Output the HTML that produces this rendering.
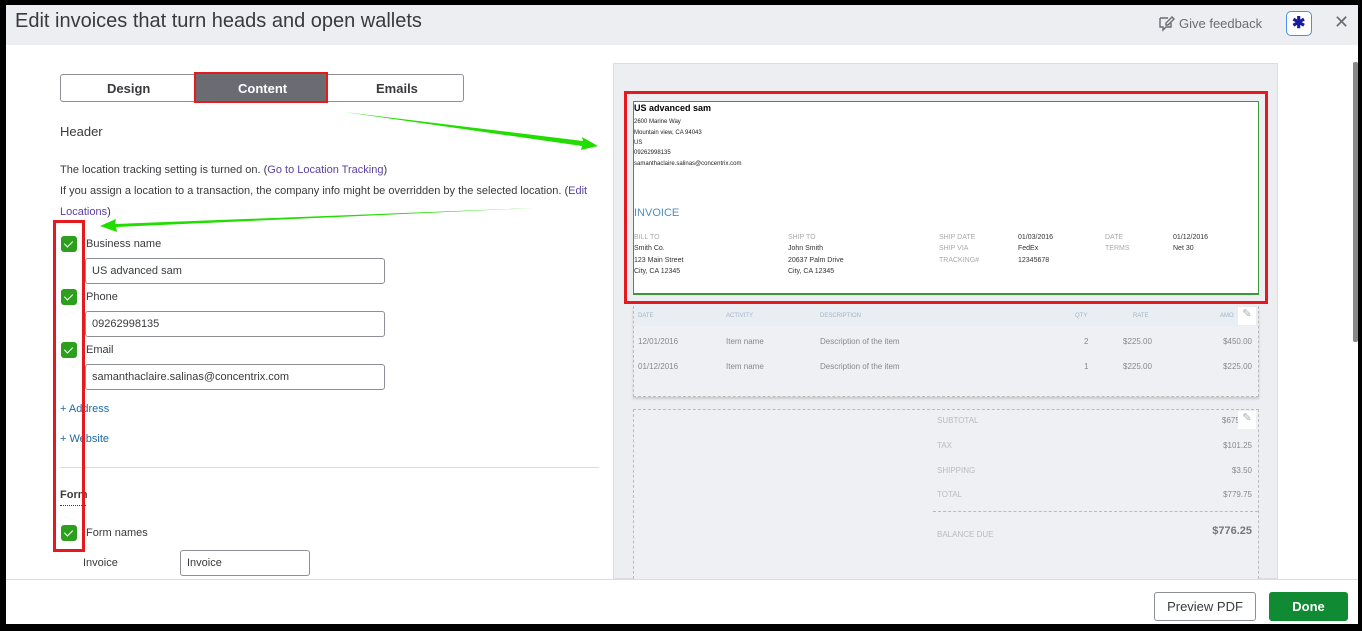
<!DOCTYPE html>
<html><head><meta charset="utf-8"><style>
*{margin:0;padding:0;box-sizing:border-box}
body{width:1362px;height:631px;background:#000;position:relative;overflow:hidden;font-family:"Liberation Sans",sans-serif;color:#393a3d}
.a{position:absolute}
.t{font-size:11px;white-space:nowrap}
.cb{position:absolute;left:61px;width:16px;height:16px;background:#2ca01c;border-radius:3px}
.cb:after{content:"";position:absolute;left:5px;top:3px;width:4px;height:7px;border:solid #fff;border-width:0 1.5px 1.5px 0;transform:rotate(45deg)}
.inp{position:absolute;left:85px;width:300px;height:26px;border:1px solid #8d9096;border-radius:3px;font-size:11px;padding:6px 0 0 6px;color:#393a3d}
.lbl{position:absolute;left:86px;font-size:11px}
.inv{font-family:"Liberation Sans",sans-serif;white-space:nowrap;position:absolute}
.s{font-size:6px;color:#222}
.g{font-size:7px;color:#aaa}
.d{font-size:7px;color:#333}
.r{font-size:8px;color:#888}
.ra{right:110px;text-align:right}
</style></head><body>
<div class="a" style="left:6px;top:5px;width:1352px;height:619px;background:#fff"></div>
<div class="a" style="left:6px;top:5px;width:1352px;height:40px;background:#eceef1"></div>
<div class="a" style="left:15px;top:10px;font-size:20px;color:#393a3d">Edit invoices that turn heads and open wallets</div>
<svg class="a" style="left:1157px;top:15px" width="18" height="18" viewBox="0 0 18 18"><path d="M3 3h8M3 3v9h3v3l3-3h5V8" fill="none" stroke="#6b6c72" stroke-width="1.4"/><path d="M15 2l2 2-6 6H9V8z" fill="none" stroke="#6b6c72" stroke-width="1.4"/></svg>
<div class="a" style="left:1179px;top:16px;font-size:13px;color:#6b6c72">Give feedback</div>
<div class="a" style="left:1286px;top:11px;width:26px;height:25px;border:1.5px solid #4c8ef0;border-radius:5px;background:#fff"></div>
<div class="a" style="left:1292px;top:13px;font-size:16px;color:#1a1a9c;font-weight:bold">✱</div>
<div class="a" style="left:1334px;top:12px;font-size:18px;color:#6b6c72">✕</div>

<div class="a" style="left:60px;top:74px;width:404px;height:28px;border:1px solid #8d9096;border-radius:3px"></div>
<div class="a" style="left:107px;top:81px;font-size:13px;font-weight:bold;color:#393a3d">Design</div>
<div class="a" style="left:194px;top:72px;width:134px;height:31px;background:#6b6c72;border:2px solid #e5191e"></div>
<div class="a" style="left:238px;top:81px;font-size:13px;font-weight:bold;color:#fff">Content</div>
<div class="a" style="left:376px;top:81px;font-size:13px;font-weight:bold;color:#393a3d">Emails</div>

<div class="a" style="left:60px;top:124px;font-size:13px">Header</div>
<div class="a t" style="left:60px;top:164px">The location tracking setting is turned on. (<span style="color:#5b3fa0">Go to Location Tracking</span>)</div>
<div class="a t" style="left:60px;top:185px">If you assign a location to a transaction, the company info might be overridden by the selected location. (<span style="color:#5b3fa0">Edit</span></div>
<div class="a t" style="left:60px;top:206px;color:#5b3fa0">Locations<span style="color:#393a3d">)</span></div>

<div class="cb" style="top:236px"></div><div class="lbl" style="top:238px">Business name</div>
<div class="inp" style="top:258px">US advanced sam</div>
<div class="cb" style="top:289px"></div><div class="lbl" style="top:291px">Phone</div>
<div class="inp" style="top:311px">09262998135</div>
<div class="cb" style="top:342px"></div><div class="lbl" style="top:344px">Email</div>
<div class="inp" style="top:364px">samanthaclaire.salinas@concentrix.com</div>
<div class="a t" style="left:60px;top:403px;color:#1d6aa4">+ Address</div>
<div class="a t" style="left:60px;top:433px;color:#1d6aa4">+ Website</div>
<div class="a" style="left:60px;top:467px;width:539px;height:1px;background:#dcdcdc"></div>
<div class="a" style="left:60px;top:489px;font-size:11px;font-weight:bold;color:#393a3d;border-bottom:1px dotted #393a3d;padding-bottom:4px;width:26px">Form</div>
<div class="cb" style="top:525px"></div><div class="lbl" style="top:527px">Form names</div>
<div class="a t" style="left:83px;top:557px">Invoice</div>
<div class="a" style="left:180px;top:550px;width:130px;height:26px;border:1px solid #8d9096;border-radius:3px;font-size:11px;padding:6px 0 0 6px">Invoice</div>

<div class="a" style="left:53px;top:220px;width:32px;height:332px;border:3px solid #e5191e"></div>

<div class="a" style="left:613px;top:63px;width:665px;height:516px;background:#eceef1;border:1px solid #dcdde0"></div>
<div class="a" style="left:624px;top:91px;width:644px;height:213px;border:3px solid #e5191e"></div>
<div class="a" style="left:633px;top:101px;width:626px;height:194px;background:#fff;border:1px solid #3a9a3a;border-bottom:2px solid #3a9a3a"></div>
<div class="inv" style="left:634px;top:103px;font-size:9px;font-weight:bold;color:#000">US advanced sam</div>
<div class="inv s" style="left:634px;top:119px">2600 Marine Way</div>
<div class="inv s" style="left:634px;top:130px">Mountain view, CA 94043</div>
<div class="inv s" style="left:634px;top:140px">US</div>
<div class="inv s" style="left:634px;top:150px">09262998135</div>
<div class="inv s" style="left:634px;top:161px">samanthaclaire.salinas@concentrix.com</div>
<div class="inv" style="left:634px;top:207px;font-size:11px;color:#4d8fbf">INVOICE</div>
<div class="inv g" style="left:634px;top:234px">BILL TO</div>
<div class="inv g" style="left:788px;top:234px">SHIP TO</div>
<div class="inv g" style="left:939px;top:234px">SHIP DATE</div>
<div class="inv d" style="left:1018px;top:234px">01/03/2016</div>
<div class="inv g" style="left:1105px;top:234px">DATE</div>
<div class="inv d" style="left:1173px;top:234px">01/12/2016</div>
<div class="inv d" style="left:634px;top:245px">Smith Co.</div>
<div class="inv d" style="left:788px;top:245px">John Smith</div>
<div class="inv g" style="left:939px;top:245px">SHIP VIA</div>
<div class="inv d" style="left:1018px;top:245px">FedEx</div>
<div class="inv g" style="left:1105px;top:245px">TERMS</div>
<div class="inv d" style="left:1173px;top:245px">Net 30</div>
<div class="inv d" style="left:634px;top:257px">123 Main Street</div>
<div class="inv d" style="left:788px;top:257px">20637 Palm Drive</div>
<div class="inv g" style="left:939px;top:257px">TRACKING#</div>
<div class="inv d" style="left:1018px;top:257px">12345678</div>
<div class="inv d" style="left:634px;top:268px">City, CA 12345</div>
<div class="inv d" style="left:788px;top:268px">City, CA 12345</div>

<div class="a" style="left:633px;top:306px;width:626px;height:91px;border:1px dashed #bbb;border-top:none;background:#eef0f3;box-shadow:0 2px 2px #ccc"></div>
<div class="a" style="left:634px;top:306px;width:624px;height:20px;background:#e9eef3"></div>
<div class="inv g" style="left:638px;top:313px;font-size:6px;color:#9fb4c8">DATE</div>
<div class="inv g" style="left:726px;top:313px;font-size:6px;color:#9fb4c8">ACTIVITY</div>
<div class="inv g" style="left:820px;top:313px;font-size:6px;color:#9fb4c8">DESCRIPTION</div>
<div class="inv g" style="left:1075px;top:313px;font-size:6px;color:#9fb4c8">QTY</div>
<div class="inv g" style="left:1133px;top:313px;font-size:6px;color:#9fb4c8">RATE</div>
<div class="inv g" style="left:1220px;top:313px;font-size:6px;color:#9fb4c8">AMO</div>
<div class="a" style="left:1238px;top:307px;width:18px;height:18px;background:#fff;color:#aaa;font-size:11px;text-align:center">✎</div>
<div class="inv r" style="left:638px;top:337px">12/01/2016</div><div class="inv r" style="left:726px;top:337px">Item name</div><div class="inv r" style="left:820px;top:337px">Description of the item</div><div class="inv r" style="left:1084px;top:337px">2</div><div class="inv r" style="left:1123px;top:337px">$225.00</div><div class="inv r ra" style="top:337px">$450.00</div>
<div class="inv r" style="left:638px;top:362px">01/12/2016</div><div class="inv r" style="left:726px;top:362px">Item name</div><div class="inv r" style="left:820px;top:362px">Description of the item</div><div class="inv r" style="left:1084px;top:362px">1</div><div class="inv r" style="left:1123px;top:362px">$225.00</div><div class="inv r ra" style="top:362px">$225.00</div>

<div class="a" style="left:633px;top:409px;width:626px;height:175px;border:1px dashed #bbb;background:#eef0f3"></div>
<div class="inv r" style="left:937px;top:416px;color:#bbb">SUBTOTAL</div><div class="inv r" style="left:1222px;top:416px">$675</div>
<div class="a" style="left:1238px;top:411px;width:18px;height:18px;background:#fff;color:#aaa;font-size:11px;text-align:center">✎</div>
<div class="inv r" style="left:937px;top:441px;color:#bbb">TAX</div><div class="inv r ra" style="top:441px">$101.25</div>
<div class="inv r" style="left:937px;top:466px;color:#bbb">SHIPPING</div><div class="inv r ra" style="top:466px">$3.50</div>
<div class="inv r" style="left:937px;top:490px;color:#bbb">TOTAL</div><div class="inv r ra" style="top:490px">$779.75</div>
<div class="a" style="left:933px;top:511px;width:325px;border-top:1px dashed #bbb"></div>
<div class="inv r" style="left:937px;top:530px;color:#bbb">BALANCE DUE</div>
<div class="inv ra" style="top:525px;font-size:11px;font-weight:bold;color:#777">$776.25</div>

<svg class="a" style="left:0;top:0" width="1362" height="631"><polygon points="344,112 583,141 582,137 598,146 581,150 582,146" fill="#22dd00"/><polygon points="535,208 115,224 116,219 100,226 117,232 116,227" fill="#22dd00"/></svg>

<div class="a" style="left:1353px;top:62px;width:5px;height:280px;background:#888;border-radius:2px"></div>

<div class="a" style="left:6px;top:579px;width:1352px;height:45px;background:#fff;border-top:1px solid #ddd"></div>
<div class="a" style="left:1154px;top:592px;width:102px;height:29px;border:1px solid #8d9096;border-radius:3px;font-size:13px;text-align:center;line-height:27px;color:#393a3d">Preview PDF</div>
<div class="a" style="left:1269px;top:592px;width:79px;height:29px;background:#108a33;border-radius:3px;font-size:13px;font-weight:bold;text-align:center;line-height:29px;color:#fff">Done</div>
</body></html>
